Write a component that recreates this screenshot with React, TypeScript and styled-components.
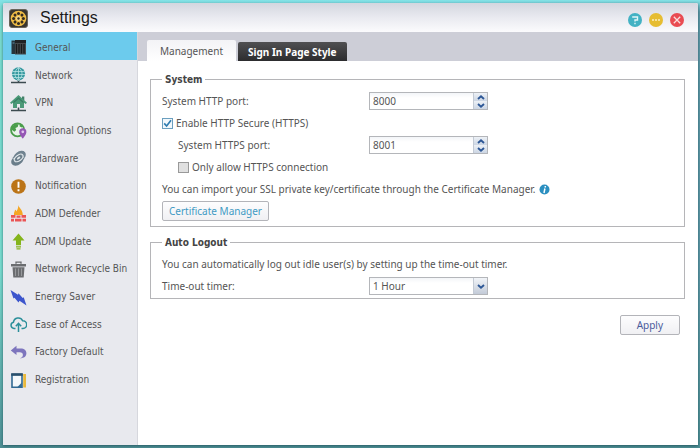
import React, { useState } from "react";
import styled, { createGlobalStyle } from "styled-components";

const Global = createGlobalStyle`
  * { box-sizing: border-box; }
  html, body { margin: 0; padding: 0; }
  body {
    background: linear-gradient(90deg, #7adccf 0, #73cfe0 60%, #5f97a6 100%);
    font-family: "DejaVu Sans Condensed", "DejaVu Sans", sans-serif;
    font-size: 10px;
    line-height: 14px;
    color: #555;
  }
  button, input, select { font: inherit; color: inherit; margin: 0; }
`;

const Desktop = styled.div`
  display: flex;
  min-height: 100vh;
  padding: 3px 2px 3px 3px;
  background: linear-gradient(180deg, #84e2e6 0, transparent 12px, transparent 60%, #4f8f94 100%);
`;

const Window = styled.div`
  flex: 1;
  min-width: 0;
  display: flex;
  flex-direction: column;
  background: #fff;
  border-radius: 2px 2px 0 0;
  overflow: hidden;
  box-shadow: 0 1px 3px rgba(20, 70, 80, 0.7);
`;

const TitleBar = styled.header`
  display: flex;
  align-items: center;
  height: 29px;
  padding: 1px 14px 0 6px;
  background: linear-gradient(180deg, #d3d6df 0, #e9eaf0 50%, #fbfbfd 100%);
`;

const Title = styled.h1`
  flex: 1;
  margin: 0 0 0 12px;
  font: 400 16px/20px "Liberation Sans", Arial, sans-serif;
  color: #1a1a1a;
`;

const Controls = styled.div`
  display: flex;
  padding-top: 4px;
  gap: 7px;
`;

const ControlButton = styled.button<{ $color: string }>`
  display: block;
  width: 14px;
  height: 14px;
  padding: 0;
  border: 0;
  border-radius: 50%;
  background: ${(p) => p.$color};
  svg { display: block; }
`;

const Body = styled.div`
  flex: 1;
  display: flex;
`;

const Sidebar = styled.nav`
  flex: none;
  width: 135px;
  background: #e8e9ee;
  border-right: 1px solid #d6d7dd;
`;

const Menu = styled.ul`
  display: grid;
  grid-auto-rows: 1fr;
  height: 360px;
  margin: 0;
  padding: 0;
  list-style: none;
`;

const MenuLink = styled.a<{ $active?: boolean }>`
  display: flex;
  align-items: center;
  gap: 8px;
  height: 100%;
  padding: 4px 0 0 7px;
  color: #555;
  white-space: nowrap;
  text-decoration: none;
  background: ${(p) => (p.$active ? "#6ccbed" : "transparent")};
  svg { flex: none; display: block; }
`;

const Main = styled.main`
  flex: 1;
  min-width: 0;
  font-family: "Noto Sans", "DejaVu Sans Condensed", sans-serif;
`;

const TabBar = styled.div`
  display: flex;
  align-items: flex-end;
  gap: 2px;
  height: 29px;
  padding-left: 9px;
  background: #cdced7;
`;

const Tab = styled.button<{ $active: boolean }>`
  height: ${(p) => (p.$active ? "21px" : "19px")};
  padding: 0 ${(p) => (p.$active ? "13px" : "10px")};
  border: 0;
  border-radius: 2px 2px 0 0;
  font-weight: ${(p) => (p.$active ? 400 : 700)};
  color: ${(p) => (p.$active ? "#555" : "#fff")};
  background: ${(p) =>
    p.$active
      ? "linear-gradient(180deg, #f3f3f6, #fff)"
      : "linear-gradient(180deg, #505052, #2c2c2e)"};
`;

const Panel = styled.form`
  display: flex;
  flex-direction: column;
  gap: 9px;
  padding: 12px 13px 12px 12px;
`;

const Group = styled.fieldset<{ $end: number }>`
  min-width: 0;
  margin: 0;
  padding: 4px 11px ${(p) => p.$end}px;
  border: 1px solid #b5b5b8;
`;

const Legend = styled.legend`
  padding: 0 3px;
  line-height: 13px;
  font-family: "DejaVu Sans Condensed", "DejaVu Sans", sans-serif;
  font-weight: 700;
  color: #444;
`;

const Row = styled.div<{ $indent?: boolean }>`
  display: flex;
  align-items: center;
  height: 22px;
  padding-left: ${(p) => (p.$indent ? "16px" : "0")};
`;

const FieldLabel = styled.label<{ $indent?: boolean }>`
  flex: none;
  width: ${(p) => (p.$indent ? "191px" : "207px")};
`;

const CheckLabel = styled.label`
  display: flex;
  align-items: center;
  gap: 3px;
`;

const Check = styled.input<{ $muted?: boolean }>`
  appearance: none;
  width: 11px;
  height: 11px;
  border: 1px solid ${(p) => (p.$muted ? "#999" : "#6b9fbf")};
  background: ${(p) => (p.$muted ? "#e0e0e0" : "#f2f8fc")} center / 9px 9px no-repeat;
  &:checked {
    background-image: url("data:image/svg+xml,%3Csvg xmlns='http://www.w3.org/2000/svg' viewBox='0 0 9 9'%3E%3Cpath d='M1.2 4.4 3.6 7 8 1.2' fill='none' stroke='%232f7cb0' stroke-width='1.7'/%3E%3C/svg%3E");
  }
`;

const Field = styled.div`
  display: flex;
  width: 119px;
  height: 18px;
  border: 1px solid #b4b6ba;
  background: linear-gradient(180deg, #f3f5f8, #fff 5px);
`;

const TextInput = styled.input`
  flex: 1;
  min-width: 0;
  padding: 0 3px;
  border: 0;
  background: transparent;
  outline: none;
`;

const Spinner = styled.div`
  display: flex;
  flex-direction: column;
  width: 14px;
  border-left: 1px solid #c3cad4;
`;

const SpinButton = styled.button`
  display: flex;
  align-items: center;
  justify-content: center;
  flex: 1;
  min-height: 0;
  padding: 0;
  border: 0;
  background: linear-gradient(180deg, #edf1f6, #ccd6e4);
`;

const SelectBox = styled.div`
  display: grid;
  grid-template-columns: 1fr 14px;
  width: 119px;
  height: 18px;
  border: 1px solid #b4b6ba;
  background: linear-gradient(180deg, #f3f5f8, #fff 5px);
`;

const Select = styled.select`
  grid-area: 1 / 1 / 2 / 3;
  appearance: none;
  padding: 0 16px 0 3px;
  border: 0;
  background: transparent;
  outline: none;
`;

const SelectArrow = styled.span`
  grid-area: 1 / 2;
  display: flex;
  align-items: center;
  justify-content: center;
  border-left: 1px solid #c3cad4;
  background: linear-gradient(180deg, #f1f4f8, #c3cbd8);
  pointer-events: none;
`;

const Button = styled.button<{ $color: string; $wide?: boolean }>`
  height: 20px;
  padding: 0 ${(p) => (p.$wide ? 16 : 6)}px;
  border: 1px solid #b3b4b9;
  border-radius: 2px;
  color: ${(p) => p.$color};
  background: linear-gradient(180deg, #fdfdfe, #f0f0f3);
`;

const Actions = styled.div`
  display: flex;
  justify-content: flex-end;
  padding: 7px 5px 0 0;
`;

const InfoIcon = styled.svg`
  margin-left: 3px;
`;

const Icon = ({ children }: { children: React.ReactNode }) => (
  <svg width="17" height="17" viewBox="0 0 17 17" fill="none" aria-hidden="true">
    {children}
  </svg>
);

const globeBase = (
  <path d="M1 15.5h15M8.5 12.5v3" stroke="#3c4b50" strokeWidth="1.6" />
);

const icons: Record<string, React.ReactNode> = {
  General: (
    <Icon>
      <path d="M1.5 1.5h4v13.5h-4z" fill="#26343c" />
      <path d="M5 1h11v14.5H5z" fill="#45494c" />
      <path d="M5 1h11v3H5z" fill="#202224" />
      <path d="M6.5 5v9.5M9 5v9.5M11.5 5v9.5M14 5v9.5" stroke="#17191a" strokeWidth="1.3" />
      <path d="M2.5 4h2" stroke="#5c8fa8" />
    </Icon>
  ),
  Network: (
    <Icon>
      {globeBase}
      <circle cx="8.5" cy="6.8" r="6.6" fill="#389aa1" />
      <path
        d="M2.5 4.5h12M2 7.5h13M3.5 10.5h10M8.5 0v13.5M8.5.3C3.8 4.2 3.8 9.6 8.5 13.4M8.5.3c4.7 3.9 4.7 9.3 0 13.1"
        stroke="#b5e2e2"
        strokeWidth=".8"
      />
    </Icon>
  ),
  VPN: (
    <Icon>
      {globeBase}
      <path d="M12 1.5h2.3v4H12z" fill="#437f68" />
      <path d="M8.5 0 0 7.8l1.3 1.3L3 7.8V13h4V9h3v4h4V7.8l1.7 1.3L17 7.8z" fill="#4b9a78" />
      <path d="M8.5 2.2 3.5 6.8v1.4l5-4.2 5 4.2V6.8z" fill="#397c62" />
    </Icon>
  ),
  "Regional Options": (
    <Icon>
      <circle cx="7.5" cy="7.8" r="6.5" stroke="#4a9d4b" strokeWidth="1.8" fill="#e9f3ea" />
      <path d="M2 4.5 5.5 2l3 .3-.8 2.6-2.3 1 .8 2.2-1.8 1.7L2 8zM10 1.8l3.2 2.4-1.7 1.4-2-1.3z" fill="#4a9d4b" />
      <path d="M12.8 6.2a3.7 3.7 0 0 0-3.6 3.7c0 2.7 3.6 6.6 3.6 6.6s3.6-3.9 3.6-6.6a3.7 3.7 0 0 0-3.6-3.7z" fill="#9556b5" />
      <circle cx="12.8" cy="9.8" r="1.4" fill="#e3c3f0" />
    </Icon>
  ),
  Hardware: (
    <Icon>
      <ellipse cx="9.5" cy="6.5" rx="7" ry="4.8" transform="rotate(-38 9.5 6.5)" fill="#708390" />
      <ellipse cx="7.5" cy="10" rx="7" ry="4.8" transform="rotate(-38 7.5 10)" fill="#6a7d8a" />
      <ellipse cx="8.7" cy="8" rx="5" ry="2.8" transform="rotate(-38 8.7 8)" stroke="#e4e9ec" strokeWidth="1.1" />
      <ellipse cx="8.6" cy="8" rx="2" ry="1.1" transform="rotate(-38 8.6 8)" fill="#dce2e6" />
      <path d="m1.8 6.8 3.4 4M11.8 5l3.2 4" stroke="#c6d0d6" strokeWidth=".8" />
    </Icon>
  ),
  Notification: (
    <Icon>
      <circle cx="8.5" cy="8.5" r="7.3" fill="#bb7417" />
      <path d="M8.5 3.8v6M8.5 11.3v2" stroke="#fff" strokeWidth="1.9" />
    </Icon>
  ),
  "ADM Defender": (
    <Icon>
      <path d="M8.3 0c.3 2.7 4.5 4.4 4.5 10H4C3.6 7 5 6.5 5 4.7c1 .4 1.3 1 1.4 1.7C7.7 4.7 8.3 2.5 8.3 0z" fill="#f5a623" />
      <path d="M1 10h4.5v2.8H1zM11.5 10H16v2.8h-4.5zM6.5 10.5h4v2.3h-4zM1 13.7h3v2.8H1zM5 13.7h6.5v2.8H5zM12.5 13.7H16v2.8h-3.5z" fill="#ea5454" />
    </Icon>
  ),
  "ADM Update": (
    <Icon>
      <path d="M8.5.5 2.5 7.5H6v4.8h5V7.5h3.5z" fill="#84b41c" />
      <path d="M6 13.2h5v1.3H6zM6.5 15.3h4v1.3h-4z" fill="#84b41c" />
    </Icon>
  ),
  "Network Recycle Bin": (
    <Icon>
      <path d="M6 2.8V1.2h5v1.6" stroke="#66686b" strokeWidth="1.3" />
      <path d="M1 3h15v2.5H1zM2.5 6.2h12l-.8 10.3H3.3z" fill="#6b6d70" />
      <path d="M5.5 7.5V15M8.5 7.5V15M11.5 7.5V15" stroke="#9c9ea1" strokeWidth=".9" />
    </Icon>
  ),
  "Energy Saver": (
    <Icon>
      <path d="m.5 1 7.5 4.7.5-1.5L12.700 9l1-.7 2.8 8.200-7-4.700-1 1.600-4-4.600-1 .7z" fill="#3c55cc" />
    </Icon>
  ),
  "Ease of Access": (
    <Icon>
      <path
        d="M5.5 12.5H4a3.2 3.2 0 0 1-.5-6.3A4.8 4.8 0 0 1 12.6 4.7a3.9 3.9 0 0 1 .4 7.8h-1.5"
        stroke="#2b8f9a"
        strokeWidth="1.5"
      />
      <path d="M8.5 16V7.5M5.8 10.2l2.7-2.9 2.7 2.9" stroke="#2b8f9a" strokeWidth="1.5" />
    </Icon>
  ),
  "Factory Default": (
    <Icon>
      <path d="M6.5 1.8.8 6.5l5.7 4.6V8.3h3.3c2 0 3.1 1 3.1 2.6 0 1.5-1 2.6-3 3.4 4.2-.1 6.5-1.9 6.5-5 0-3-2.2-4.7-5.7-4.7H6.5z" fill="#7d75bd" />
    </Icon>
  ),
  Registration: (
    <Icon>
      <path d="M13.2 2H16v13.5h-2.8z" fill="#e9b93c" />
      <path d="M2 2.5h10v12.7H2z" fill="#f4f8fb" stroke="#316a94" strokeWidth="1.6" />
      <path d="M1.2 1.2h11.6v2.6H1.2z" fill="#294f6c" />
      <path d="M11.8 10.5V15H7.5z" fill="#316a94" />
    </Icon>
  ),
};

const holeAngles = [0, 45, 90, 135, 180, 225, 270, 315];

const GearLogo = () => (
  <svg width="19" height="19" viewBox="0 0 19 19" aria-hidden="true">
    <rect x=".5" y=".5" width="18" height="18" rx="2.5" fill="#38352f" stroke="#69645a" />
    <circle cx="9.5" cy="9.5" r="7.8" fill="#f0bd45" />
    {holeAngles.map((angle) => (
      <circle key={angle} cx="9.5" cy="4.6" r="1.5" fill="#332c22" transform={`rotate(${angle} 9.5 9.5)`} />
    ))}
    <circle cx="9.5" cy="9.5" r="2.4" fill="#f7dc93" />
    <circle cx="9.5" cy="9.5" r="1.2" fill="#332c22" />
  </svg>
);

const Chevron = ({ up }: { up?: boolean }) => (
  <svg width="8" height="5" viewBox="0 0 8 5" aria-hidden="true">
    <path d={up ? "M1 4 4 1.3 7 4" : "M1 1 4 3.7 7 1"} fill="none" stroke="#2d5796" strokeWidth="1.9" />
  </svg>
);

function PortField({ id, initial }: { id: string; initial: number }) {
  const [value, setValue] = useState(initial);
  return (
    <Field>
      <TextInput id={id} value={value} onChange={(e) => setValue(Number(e.target.value) || 0)} />
      <Spinner>
        <SpinButton type="button" aria-label="Increase" onClick={() => setValue(value + 1)}>
          <Chevron up />
        </SpinButton>
        <SpinButton type="button" aria-label="Decrease" onClick={() => setValue(value - 1)}>
          <Chevron />
        </SpinButton>
      </Spinner>
    </Field>
  );
}

export default function App() {
  const [tab, setTab] = useState("Management");
  return (
    <>
      <Global />
      <Desktop>
        <Window>
          <TitleBar>
            <GearLogo />
            <Title>Settings</Title>
            <Controls>
              <ControlButton $color="#43b2c4" aria-label="Help">
                <svg width="14" height="14" viewBox="0 0 14 14">
                  <path d="M4.2 4h5.3v3H7v1.6M7 9.8v1.5" fill="none" stroke="#e3f6f8" strokeWidth="1.4" />
                </svg>
              </ControlButton>
              <ControlButton $color="#e6bd32" aria-label="Minimize">
                <svg width="14" height="14" viewBox="0 0 14 14">
                  <path d="M3 7h8" stroke="#fbf0c0" strokeWidth="1.4" strokeDasharray="2 1" />
                </svg>
              </ControlButton>
              <ControlButton $color="#e94b52" aria-label="Close">
                <svg width="14" height="14" viewBox="0 0 14 14">
                  <path d="m3.8 3.8 6.4 6.4m0-6.4-6.4 6.4" stroke="#fbdcdc" strokeWidth="1.3" />
                </svg>
              </ControlButton>
            </Controls>
          </TitleBar>
          <Body>
            <Sidebar>
              <Menu>
                {Object.keys(icons).map((name) => (
                  <li key={name}>
                    <MenuLink href="#" $active={name === "General"}>
                      {icons[name]}
                      {name}
                    </MenuLink>
                  </li>
                ))}
              </Menu>
            </Sidebar>
            <Main>
              <TabBar role="tablist">
                {["Management", "Sign In Page Style"].map((name) => (
                  <Tab
                    key={name}
                    type="button"
                    role="tab"
                    aria-selected={tab === name}
                    $active={tab === name}
                    onClick={() => setTab(name)}
                  >
                    {name}
                  </Tab>
                ))}
              </TabBar>
              <Panel onSubmit={(e) => e.preventDefault()}>
                <Group $end={4}>
                  <Legend>System</Legend>
                  <Row>
                    <FieldLabel htmlFor="http">System HTTP port:</FieldLabel>
                    <PortField id="http" initial={8000} />
                  </Row>
                  <Row>
                    <CheckLabel>
                      <Check type="checkbox" defaultChecked />
                      Enable HTTP Secure (HTTPS)
                    </CheckLabel>
                  </Row>
                  <Row $indent>
                    <FieldLabel $indent htmlFor="https">
                      System HTTPS port:
                    </FieldLabel>
                    <PortField id="https" initial={8001} />
                  </Row>
                  <Row $indent>
                    <CheckLabel>
                      <Check type="checkbox" $muted />
                      Only allow HTTPS connection
                    </CheckLabel>
                  </Row>
                  <Row>
                    You can import your SSL private key/certificate through the Certificate Manager.
                    <InfoIcon width="11" height="11" viewBox="0 0 11 11" aria-hidden="true">
                      <circle cx="5.5" cy="5.5" r="5" fill="#2b8fc0" />
                      <path d="M6.3 2v1.5M5.9 4.5 5 9" stroke="#fff" strokeWidth="1.5" />
                    </InfoIcon>
                  </Row>
                  <Row>
                    <Button type="button" $color="#3f9ac4">
                      Certificate Manager
                    </Button>
                  </Row>
                </Group>
                <Group $end={1}>
                  <Legend>Auto Logout</Legend>
                  <Row>
                    You can automatically log out idle user(s) by setting up the time-out timer.
                  </Row>
                  <Row>
                    <FieldLabel htmlFor="timer">Time-out timer:</FieldLabel>
                    <SelectBox>
                      <SelectArrow>
                        <Chevron />
                      </SelectArrow>
                      <Select id="timer" defaultValue="1 Hour">
                        <option>1 Hour</option>
                      </Select>
                    </SelectBox>
                  </Row>
                </Group>
                <Actions>
                  <Button type="submit" $color="#4a5b9c" $wide>
                    Apply
                  </Button>
                </Actions>
              </Panel>
            </Main>
          </Body>
        </Window>
      </Desktop>
    </>
  );
}
